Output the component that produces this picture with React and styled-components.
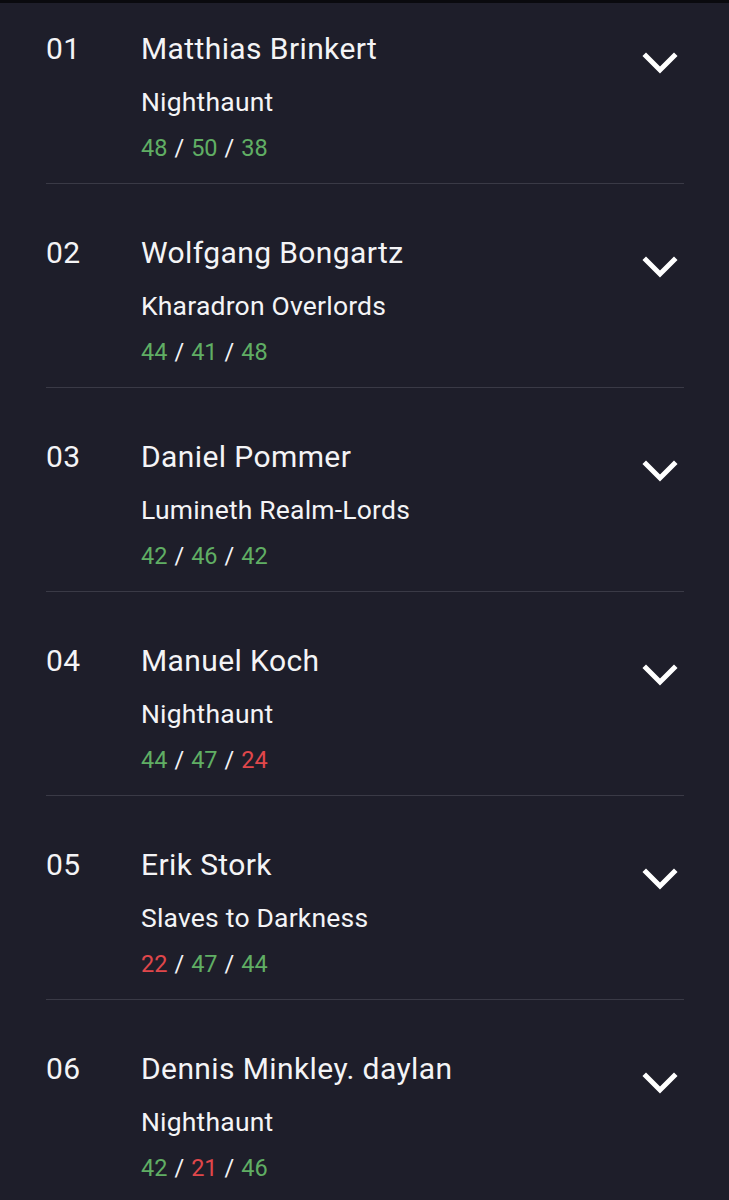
import React from "react"
import styled, { createGlobalStyle } from "styled-components"

const GlobalStyle = createGlobalStyle`
  html, body {
    margin: 0;
    padding: 0;
    background: #1e1e2a;
  }
  body {
    font-family: Roboto, "Liberation Sans", sans-serif;
    color: #f4f4f6;
  }
`

const Page = styled.div`
  min-height: 1200px;
  background: #1e1e2a;
`

const TopEdge = styled.div`
  height: 3px;
  background: #0a0a0e;
`

const List = styled.div`
  padding: 0 45px 0 46px;
`

const Row = styled.div`
  display: flex;
  align-items: flex-start;
  padding: 53px 0 22px;
  border-bottom: 1px solid #3a3a46;
  &:first-child {
    padding-top: 30px;
  }
`

const Rank = styled.div`
  width: 95px;
  flex-shrink: 0;
  font-size: 30px;
  line-height: 32px;
  letter-spacing: 0.5px;
`

const Info = styled.div`
  flex: 1;
  display: flex;
  flex-direction: column;
`

const Name = styled.div`
  font-size: 30px;
  line-height: 32px;
  letter-spacing: 0.4px;
`

const Faction = styled.div`
  margin-top: 23px;
  font-size: 26.5px;
  line-height: 28px;
  letter-spacing: 0.2px;
`

const Stats = styled.div`
  margin-top: 19px;
  font-size: 23.5px;
  line-height: 26px;
`

const Score = styled.span`
  color: ${(p) => (p.low ? "#e0474b" : "#60ae64")};
`

const Slash = styled.span`
  color: #f4f4f6;
  margin: 0 7px;
`

const Toggle = styled.button`
  width: 48px;
  height: 48px;
  margin-top: 6px;
  padding: 0;
  border: 0;
  background: none;
  display: flex;
  align-items: center;
  justify-content: center;
  cursor: pointer;
`

const Chevron = () => (
  <svg width="36" height="24" viewBox="0 0 36 24">
    <path
      d="M4 5 L18 19 L32 5"
      fill="none"
      stroke="#ffffff"
      strokeWidth="5"
      strokeLinecap="square"
    />
  </svg>
)

const players = [
  { rank: "01", name: "Matthias Brinkert", faction: "Nighthaunt", scores: [48, 50, 38] },
  { rank: "02", name: "Wolfgang Bongartz", faction: "Kharadron Overlords", scores: [44, 41, 48] },
  { rank: "03", name: "Daniel Pommer", faction: "Lumineth Realm-Lords", scores: [42, 46, 42] },
  { rank: "04", name: "Manuel Koch", faction: "Nighthaunt", scores: [44, 47, 24] },
  { rank: "05", name: "Erik Stork", faction: "Slaves to Darkness", scores: [22, 47, 44] },
  { rank: "06", name: "Dennis Minkley. daylan", faction: "Nighthaunt", scores: [42, 21, 46] }
]

export default function App() {
  return (
    <Page>
      <GlobalStyle />
      <TopEdge />
      <List>
        {players.map((p) => (
          <Row key={p.rank}>
            <Rank>{p.rank}</Rank>
            <Info>
              <Name>{p.name}</Name>
              <Faction>{p.faction}</Faction>
              <Stats>
                {p.scores.map((s, i) => (
                  <React.Fragment key={i}>
                    {i > 0 && <Slash>/</Slash>}
                    <Score low={s < 30}>{s}</Score>
                  </React.Fragment>
                ))}
              </Stats>
            </Info>
            <Toggle aria-label="expand">
              <Chevron />
            </Toggle>
          </Row>
        ))}
      </List>
    </Page>
  )
}
